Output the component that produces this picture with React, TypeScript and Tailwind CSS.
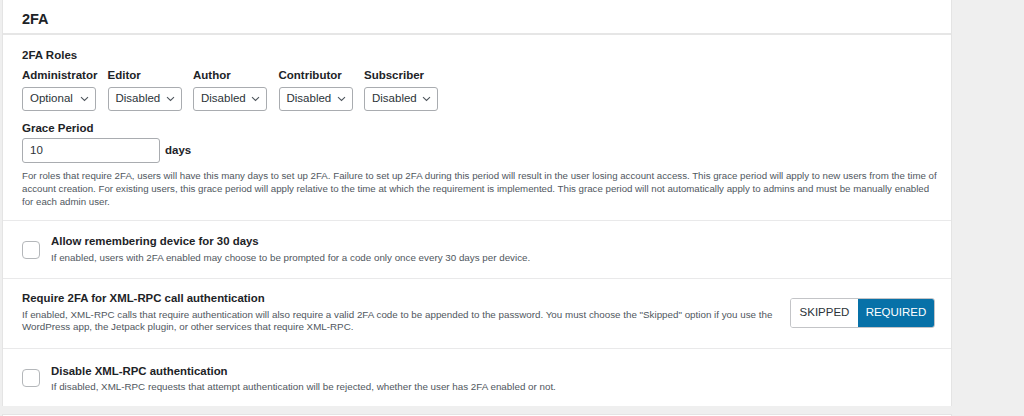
import type { ReactNode } from 'react';

const font = { fontFamily: '"Liberation Sans", Arial, Helvetica, sans-serif' };

const roles = [
  { name: 'Administrator', value: 'Optional' },
  { name: 'Editor', value: 'Disabled' },
  { name: 'Author', value: 'Disabled' },
  { name: 'Contributor', value: 'Disabled' },
  { name: 'Subscriber', value: 'Disabled' },
];

const Chevron = () => (
  <svg width="9" height="6" viewBox="0 0 9 6" fill="none" className="ml-auto">
    <path d="M1 1.2l3.5 3.3L8 1.2" stroke="#50575e" strokeWidth="1.1" />
  </svg>
);

const Checkbox = () => (
  <span className="block h-[18px] w-[18px] shrink-0 rounded-[4px] border border-[#b4b7ba] bg-white" />
);

const Row = ({ children, className }: { children: ReactNode; className?: string }) => (
  <div className={`border-t border-[#e9e9ea] pl-[19px] ${className ?? ''}`}>{children}</div>
);

const App = () => {
  return (
    <div className="min-h-[416px] w-[1024px] overflow-hidden bg-[#efefef] text-[#1d2327]" style={font}>
      <div className="ml-[2px] w-[950px] border-x border-[#e4e4e4] bg-white">
        <div className="h-[35px] border-b-2 border-[#e6e6e6] pl-[19px] pt-[12px] text-[14.5px] font-bold leading-[14px]">
          2FA
        </div>

        <div className="pb-[12px] pl-[19px] pr-[10px] pt-[13px]">
          <div className="text-[11.5px] font-bold leading-[14px]">2FA Roles</div>
          <div className="mt-[6px] flex gap-[11.5px]">
            {roles.map((r) => (
              <div key={r.name} className="w-[74px]">
                <div className="text-[11.5px] font-bold leading-[14px] whitespace-nowrap">{r.name}</div>
                <div className="mt-[5px] flex h-[24px] items-center rounded-[3px] border border-[#a9acb0] pl-[7px] pr-[6px] text-[11.5px] text-[#2c3338]">
                  {r.value}
                  <Chevron />
                </div>
              </div>
            ))}
          </div>

          <div className="mt-[10px] text-[11.5px] font-bold leading-[14px]">Grace Period</div>
          <div className="mt-[3px] flex items-center gap-[5px]">
            <div className="flex h-[25px] w-[138px] items-center rounded-[3px] border border-[#a9acb0] pl-[7px] text-[11.5px] text-[#2c3338]">
              10
            </div>
            <span className="text-[11.5px] font-bold">days</span>
          </div>

          <p className="mt-[6px] text-[9.7px] leading-[13px] text-[#50575e]">
            For roles that require 2FA, users will have this many days to set up 2FA. Failure to set up 2FA during this
            period will result in the user losing account access. This grace period will apply to new users from the
            time of account creation. For existing users, this grace period will apply relative to the time at which the
            requirement is implemented. This grace period will not automatically apply to admins and must be manually
            enabled for each admin user.
          </p>
        </div>

        <Row className="flex items-start gap-[11px] pb-[14px] pt-[13px]">
          <div className="mt-[7px]">
            <Checkbox />
          </div>
          <div>
            <div className="text-[11.4px] font-bold leading-[15px]">Allow remembering device for 30 days</div>
            <div className="mt-[2px] text-[9.8px] leading-[13px] text-[#50575e]">
              If enabled, users with 2FA enabled may choose to be prompted for a code only once every 30 days per device.
            </div>
          </div>
        </Row>

        <Row className="flex items-center gap-[6px] pb-[15px] pt-[12px]">
          <div className="w-[762px]">
            <div className="text-[11.4px] font-bold leading-[15px]">Require 2FA for XML-RPC call authentication</div>
            <div className="mt-[3px] text-[9.8px] leading-[12px] text-[#50575e]">
              If enabled, XML-RPC calls that require authentication will also require a valid 2FA code to be appended to
              the password. You must choose the "Skipped" option if you use the WordPress app, the Jetpack plugin, or
              other services that require XML-RPC.
            </div>
          </div>
          <div className="mt-[2px] flex h-[30px] overflow-hidden rounded-[3px] border border-[#c3c4c7] text-[11.5px]">
            <span className="flex w-[67px] items-center justify-center bg-white text-[#2c3338]">SKIPPED</span>
            <span className="flex w-[76px] items-center justify-center bg-[#0771a8] text-white">REQUIRED</span>
          </div>
        </Row>

        <Row className="flex items-start gap-[11px] pb-[13px] pt-[15px]">
          <div className="mt-[5px]">
            <Checkbox />
          </div>
          <div>
            <div className="text-[11.4px] font-bold leading-[15px]">Disable XML-RPC authentication</div>
            <div className="mt-[1px] text-[9.8px] leading-[13px] text-[#50575e]">
              If disabled, XML-RPC requests that attempt authentication will be rejected, whether the user has 2FA enabled
              or not.
            </div>
          </div>
        </Row>
      </div>

      <div className="ml-[2px] mt-[8px] h-[20px] w-[950px] border-x border-t border-[#e4e4e4] bg-white" />
    </div>
  );
};

export default App;
